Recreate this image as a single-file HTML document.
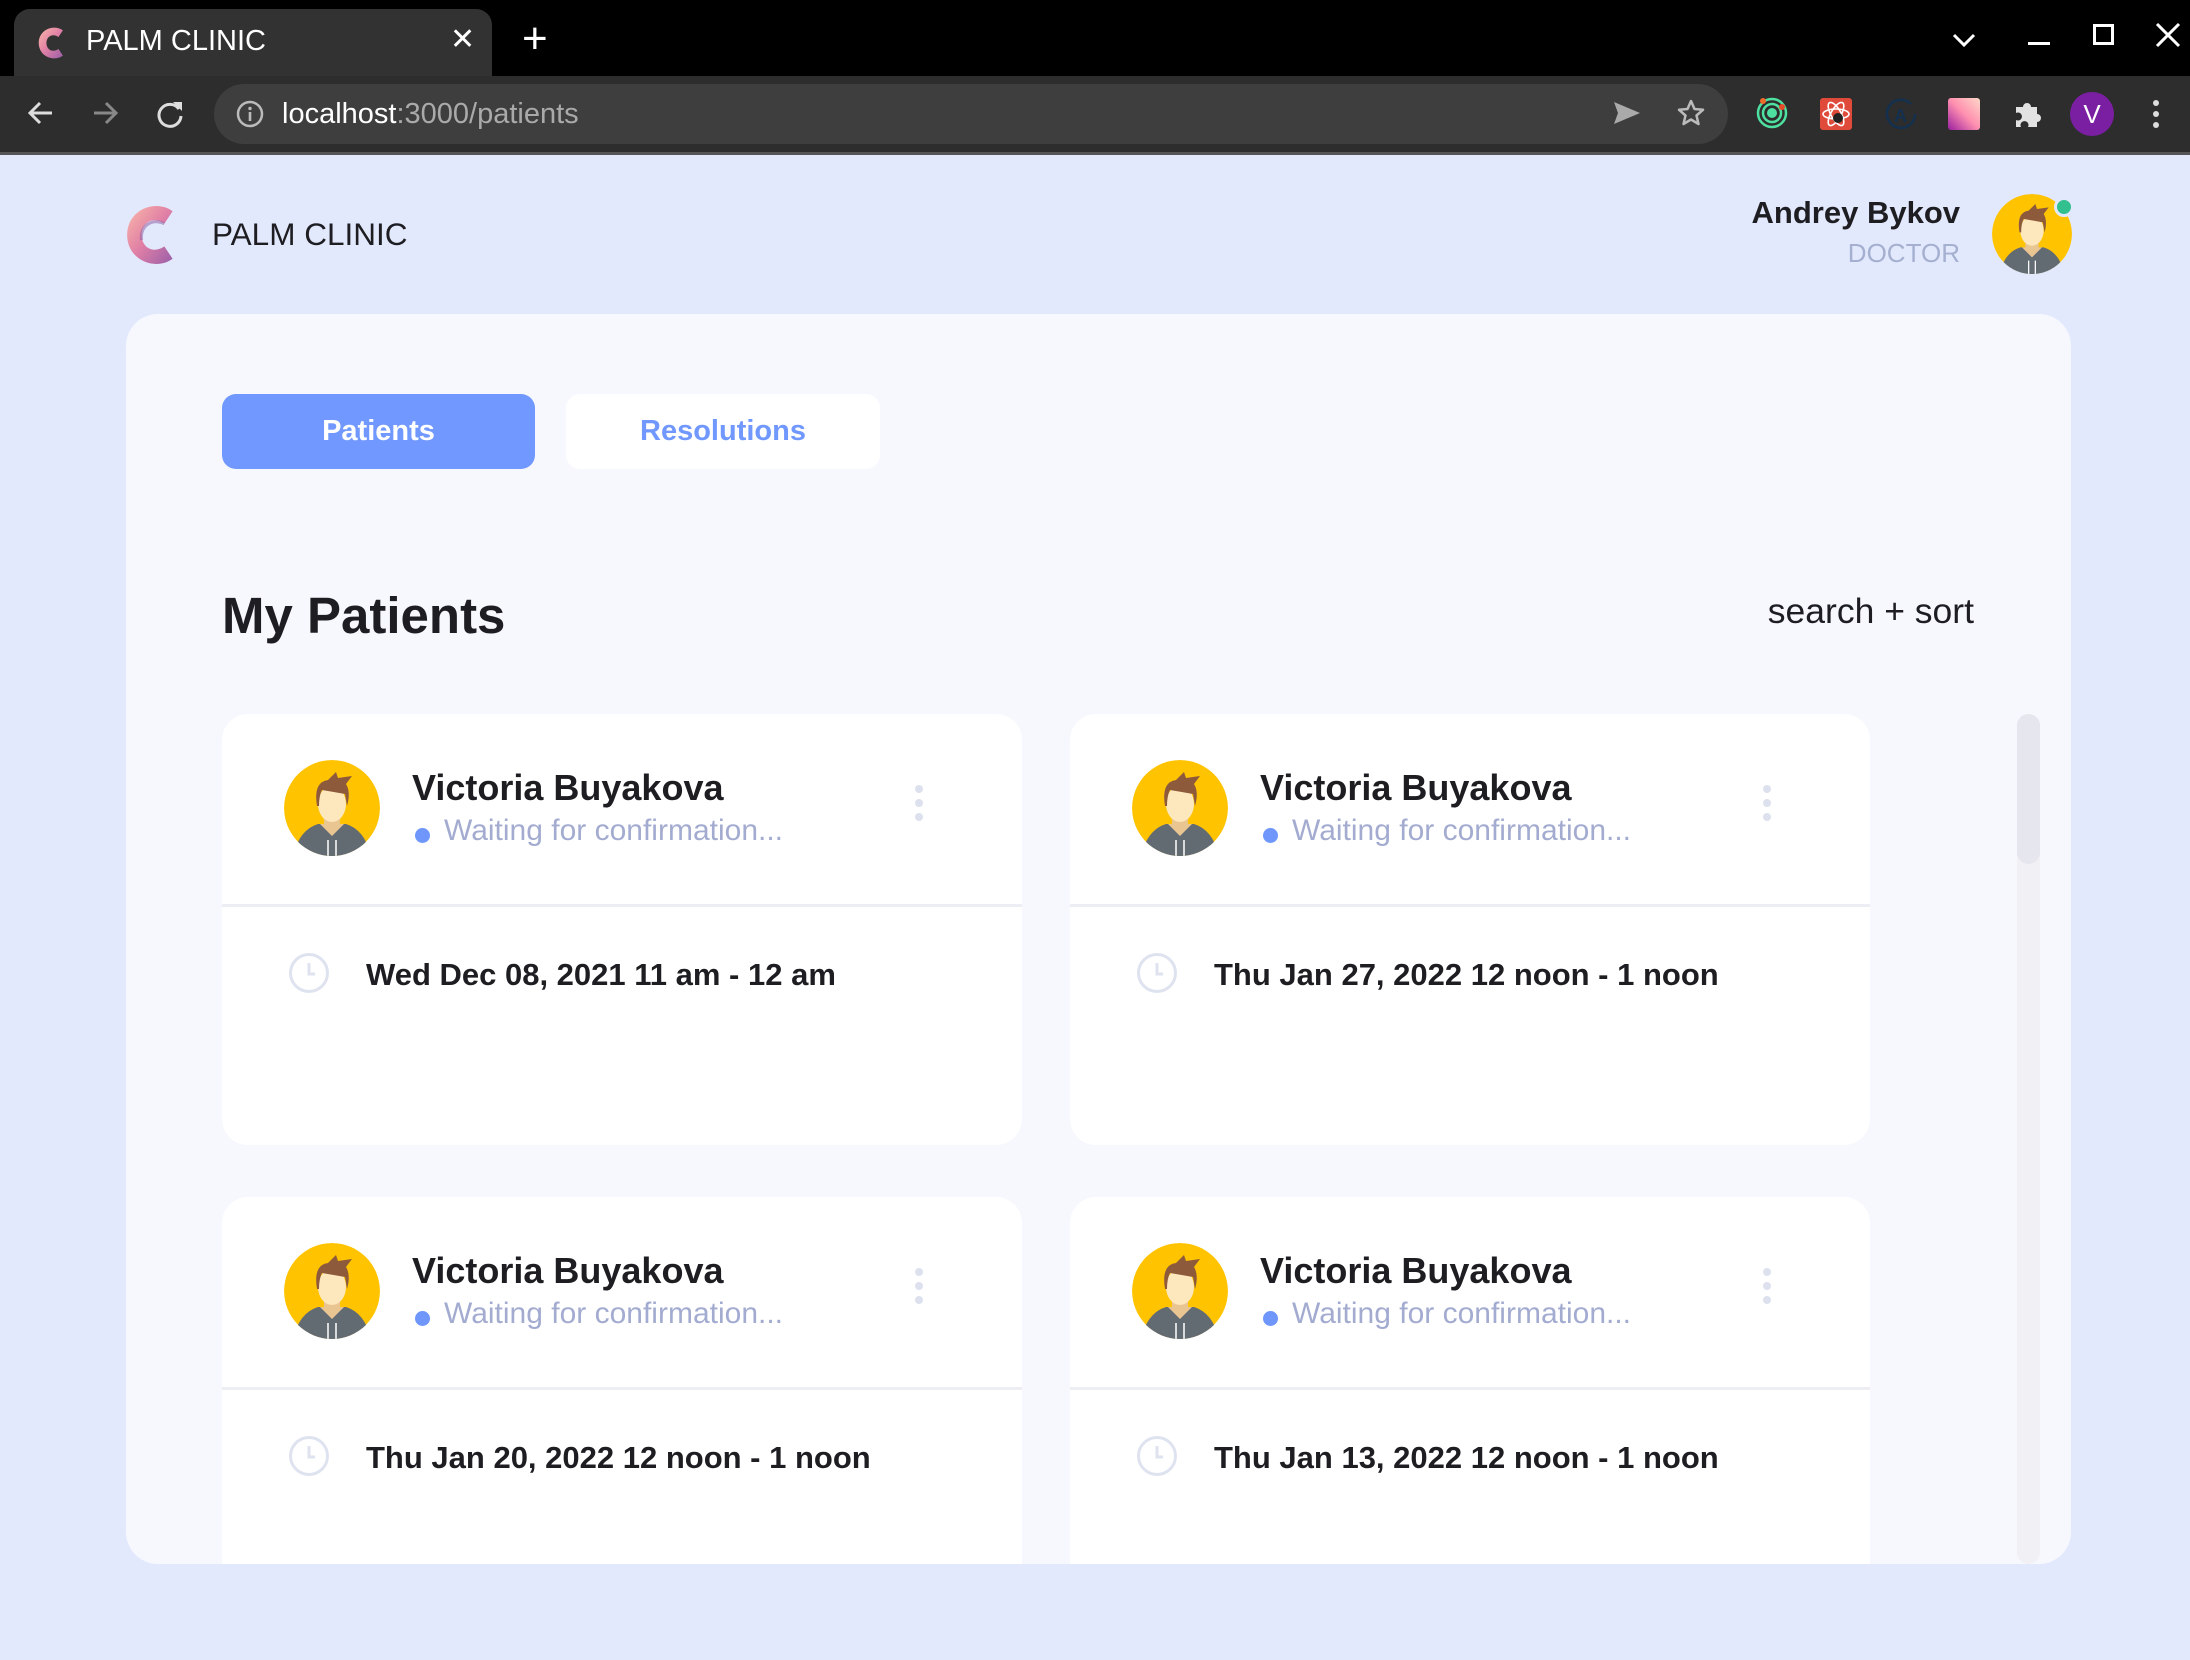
<!DOCTYPE html>
<html><head><meta charset="utf-8">
<style>
*{margin:0;padding:0;box-sizing:border-box}
body{width:2190px;height:1660px;background:#e3e9fd;font-family:"Liberation Sans",sans-serif;position:relative;overflow:hidden}
.a{position:absolute}
.card{position:absolute;width:800px;background:#fff;border-radius:26px;overflow:hidden}
.card .nm{position:absolute;left:190px;top:53px;font-size:36px;font-weight:bold;color:#1d1d22;white-space:nowrap}
.card .st{position:absolute;left:222px;top:100px;font-size:30px;color:#a3acd0;white-space:nowrap}
.card .dot{position:absolute;left:193px;top:114px;width:15px;height:15px;border-radius:50%;background:#6f97fb}
.card .av{position:absolute;left:62px;top:46px}
.card .kb{position:absolute;left:692px;top:70px}
.card .dv{position:absolute;left:0;top:190px;width:100%;height:3px;background:#eceef4}
.card .ck{position:absolute;left:66px;top:238px}
.card .dt{position:absolute;left:144px;top:243px;font-size:31px;font-weight:bold;color:#1d1d22;white-space:nowrap}
</style></head><body>
<svg width="0" height="0" style="position:absolute"><defs>
<clipPath id="cc"><circle cx="48" cy="48" r="48"/></clipPath>
<linearGradient id="lg" x1="0" y1="0" x2="1" y2="1"><stop offset="0" stop-color="#fbb9a8"/><stop offset=".5" stop-color="#e07fa6"/><stop offset="1" stop-color="#9a5fa8"/></linearGradient>
</defs></svg>

<div class="a" style="left:0;top:0;width:2190px;height:76px;background:#000"></div>
<div class="a" style="left:14px;top:9px;width:478px;height:70px;background:#323232;border-radius:16px 16px 0 0"></div>
<svg class="a" style="left:36px;top:26px" width="34" height="34" viewBox="0 0 56 62"><path d="M46 8 C30 -4 2 6 2 31 C2 56 30 66 46 54 L38 42 C26 50 16 42 16 31 C16 20 26 12 38 20 Z" fill="url(#lg)"/></svg>
<div class="a" style="left:86px;top:25px;font-size:29px;color:#fff">PALM CLINIC</div>
<div class="a" style="left:450px;top:22px;font-size:30px;color:#fff">✕</div>
<div class="a" style="left:522px;top:14px;font-size:44px;color:#fff;font-weight:300">+</div>
<svg class="a" style="left:1950px;top:30px" width="28" height="20" viewBox="0 0 28 20"><path d="M4 5 L14 15 L24 5" stroke="#fff" stroke-width="3" fill="none"/></svg>
<div class="a" style="left:2028px;top:42px;width:22px;height:3px;background:#fff"></div>
<div class="a" style="left:2093px;top:24px;width:21px;height:21px;border:3px solid #fff"></div>
<svg class="a" style="left:2155px;top:22px" width="26" height="26" viewBox="0 0 26 26"><path d="M2 2 L24 24 M24 2 L2 24" stroke="#fff" stroke-width="3"/></svg>

<div class="a" style="left:0;top:76px;width:2190px;height:76px;background:#2d2d2d"></div>
<div class="a" style="left:0;top:152px;width:2190px;height:3px;background:#555"></div>
<svg class="a" style="left:26px;top:98px" width="30" height="30" viewBox="0 0 30 30"><path d="M26 15 H5 M14 5 L4 15 L14 25" stroke="#ddd" stroke-width="3" fill="none"/></svg>
<svg class="a" style="left:90px;top:98px" width="30" height="30" viewBox="0 0 30 30"><path d="M4 15 H25 M16 5 L26 15 L16 25" stroke="#888" stroke-width="3" fill="none"/></svg>
<svg class="a" style="left:154px;top:98px" width="32" height="32" viewBox="0 0 32 32"><path d="M25 11 A11 11 0 1 0 27 18" stroke="#ddd" stroke-width="3" fill="none"/><path d="M19 4 L28 4 L28 13 Z" fill="#ddd"/></svg>
<div class="a" style="left:214px;top:84px;width:1514px;height:60px;background:#3e3e3e;border-radius:30px"></div>
<svg class="a" style="left:236px;top:100px" width="28" height="28" viewBox="0 0 28 28"><circle cx="14" cy="14" r="12" stroke="#bbb" stroke-width="2.5" fill="none"/><rect x="12.7" y="12" width="2.6" height="9" fill="#bbb"/><circle cx="14" cy="8.5" r="1.7" fill="#bbb"/></svg>
<div class="a" style="left:282px;top:98px;font-size:29px;color:#fff">localhost<span style="color:#aaa">:3000/patients</span></div>
<svg class="a" style="left:1612px;top:100px" width="30" height="26" viewBox="0 0 30 26"><path d="M2 2 L28 13 L2 24 L6 13 Z" fill="#aaa"/></svg>
<svg class="a" style="left:1676px;top:98px" width="30" height="30" viewBox="0 0 30 30"><path d="M15 3 L18.5 11 L27 11.8 L20.5 17.5 L22.5 26 L15 21.5 L7.5 26 L9.5 17.5 L3 11.8 L11.5 11 Z" stroke="#bbb" stroke-width="2.5" fill="none" stroke-linejoin="round"/></svg>
<svg class="a" style="left:1756px;top:97px" width="32" height="32" viewBox="0 0 32 32"><circle cx="16" cy="16" r="14" stroke="#4ee0a0" stroke-width="2.5" fill="none"/><circle cx="16" cy="16" r="9" stroke="#4ee0a0" stroke-width="2.5" fill="none"/><circle cx="16" cy="16" r="5" fill="#4ee0a0"/><circle cx="7" cy="4" r="3" fill="#f06a2a"/><circle cx="26" cy="10" r="3" fill="#e84a2a"/></svg>
<div class="a" style="left:1820px;top:98px;width:32px;height:32px;background:#e04a3a;border-radius:3px"></div>
<svg class="a" style="left:1820px;top:98px" width="32" height="32" viewBox="0 0 32 32"><g stroke="#fff" stroke-width="1.6" fill="none"><ellipse cx="16" cy="16" rx="13" ry="5"/><ellipse cx="16" cy="16" rx="13" ry="5" transform="rotate(60 16 16)"/><ellipse cx="16" cy="16" rx="13" ry="5" transform="rotate(-60 16 16)"/></g><circle cx="18" cy="20" r="5" fill="#222"/></svg>
<svg class="a" style="left:1884px;top:97px" width="34" height="34" viewBox="0 0 34 34"><path d="M27 7 A14 14 0 1 0 31 17" stroke="#13304f" stroke-width="2.5" fill="none"/><text x="10" y="25" font-size="18" font-weight="bold" fill="#13304f" font-family="Liberation Sans">A</text></svg>
<div class="a" style="left:1948px;top:98px;width:32px;height:32px;border-radius:3px;background:linear-gradient(225deg,#ffd8c8,#ff8fb0 50%,#9a1fa0)"></div>
<svg class="a" style="left:2012px;top:98px" width="32" height="32" viewBox="0 0 32 32"><path d="M4 9 H11 A4 4 0 1 1 19 9 H25 V16 A4 4 0 1 1 25 24 V29 H16 A4 4 0 1 0 9 29 H4 V22 A4 4 0 1 0 4 15 Z" fill="#e2e2e2"/></svg>
<div class="a" style="left:2070px;top:92px;width:44px;height:44px;border-radius:50%;background:#7a1fa2;color:#fff;font-size:26px;text-align:center;line-height:44px">V</div>
<svg class="a" style="left:2150px;top:98px" width="12" height="32" viewBox="0 0 12 32"><circle cx="6" cy="5" r="3" fill="#ddd"/><circle cx="6" cy="16" r="3" fill="#ddd"/><circle cx="6" cy="27" r="3" fill="#ddd"/></svg>

<svg class="a" style="left:124px;top:203px" width="60" height="64" viewBox="0 0 56 62"><path d="M46 8 C30 -4 2 6 2 31 C2 56 30 66 46 54 L38 42 C26 50 16 42 16 31 C16 20 26 12 38 20 Z" fill="url(#lg)"/><path d="M38 20 C24 14 14 24 16 36" stroke="#8a5aa0" stroke-width="3" fill="none" opacity=".5"/></svg>
<div class="a" style="left:212px;top:216px;font-size:31.5px;color:#1d1d22">PALM CLINIC</div>
<div class="a" style="right:230px;top:195px;font-size:31px;font-weight:bold;color:#1d1d22;white-space:nowrap">Andrey Bykov</div>
<div class="a" style="right:230px;top:238px;font-size:26px;color:#a5b0d0">DOCTOR</div>
<svg class="a" style="left:1992px;top:194px" width="80" height="80" viewBox="0 0 96 96"><g clip-path="url(#cc)"><circle cx="48" cy="48" r="48" fill="#ffc300"/><path d="M8 100 Q14 70 34 64 L62 64 Q82 70 88 100 Z" fill="#636b72"/><rect x="40" y="54" width="16" height="14" fill="#e9c592"/><path d="M36 64 L48 76 L60 64" fill="#e9c592"/><ellipse cx="48" cy="44" rx="14" ry="18" fill="#fde7bd"/><path d="M33 46 Q29 22 44 20 L52 12 L54 18 L68 16 L62 24 Q67 32 63 46 L61 34 Q50 32 38 30 Q35 36 35 46 Z" fill="#8d5a3b"/><path d="M44 80 V96 M52 80 V96" stroke="#fff" stroke-width="1.5"/></g></svg>
<div class="a" style="left:2054px;top:197px;width:20px;height:20px;border-radius:50%;background:#31c08e;border:3px solid #e3e9fd"></div>

<div class="a" style="left:126px;top:314px;width:1945px;height:1250px;background:#f7f8fe;border-radius:32px;overflow:hidden">
  <div class="a" style="left:96px;top:80px;width:313px;height:75px;background:#7098fe;border-radius:14px;color:#fff;font-size:29px;font-weight:bold;text-align:center;line-height:75px">Patients</div>
  <div class="a" style="left:440px;top:80px;width:314px;height:75px;background:#fff;border-radius:14px;color:#7098fe;font-size:29px;font-weight:bold;text-align:center;line-height:75px">Resolutions</div>
  <div class="a" style="left:96px;top:272px;font-size:51px;font-weight:bold;color:#1d1d22">My Patients</div>
  <div class="a" style="right:97px;top:277px;font-size:35.5px;color:#1d1d22;white-space:nowrap">search + sort</div>
  <div class="a" style="left:1891px;top:400px;width:23px;height:850px;background:#f1f0f5;border-radius:12px"></div>
  <div class="a" style="left:1891px;top:400px;width:23px;height:150px;background:#e5e6ee;border-radius:12px"></div>

  <div class="card" style="left:96px;top:400px;height:431px">
    <svg class="av" width="96" height="96" viewBox="0 0 96 96"><g clip-path="url(#cc)"><circle cx="48" cy="48" r="48" fill="#ffc300"/><path d="M8 100 Q14 70 34 64 L62 64 Q82 70 88 100 Z" fill="#636b72"/><rect x="40" y="54" width="16" height="14" fill="#e9c592"/><path d="M36 64 L48 76 L60 64" fill="#e9c592"/><ellipse cx="48" cy="44" rx="14" ry="18" fill="#fde7bd"/><path d="M33 46 Q29 22 44 20 L52 12 L54 18 L68 16 L62 24 Q67 32 63 46 L61 34 Q50 32 38 30 Q35 36 35 46 Z" fill="#8d5a3b"/><path d="M44 80 V96 M52 80 V96" stroke="#fff" stroke-width="1.5"/></g></svg>
    <div class="nm">Victoria Buyakova</div><div class="dot"></div><div class="st">Waiting for confirmation...</div>
    <svg class="kb" width="10" height="40" viewBox="0 0 10 40"><circle cx="5" cy="5" r="4" fill="#dde1ee"/><circle cx="5" cy="19" r="4" fill="#dde1ee"/><circle cx="5" cy="33" r="4" fill="#dde1ee"/></svg>
    <div class="dv"></div>
    <svg class="ck" width="42" height="42" viewBox="0 0 42 42"><circle cx="21" cy="21" r="18.5" stroke="#dfe3ef" stroke-width="3" fill="none"/><path d="M21 11 V22 H27" stroke="#dfe3ef" stroke-width="3" fill="none"/></svg>
    <div class="dt">Wed Dec 08, 2021 11 am - 12 am</div>
  </div>

  <div class="card" style="left:944px;top:400px;height:431px">
    <svg class="av" width="96" height="96" viewBox="0 0 96 96"><g clip-path="url(#cc)"><circle cx="48" cy="48" r="48" fill="#ffc300"/><path d="M8 100 Q14 70 34 64 L62 64 Q82 70 88 100 Z" fill="#636b72"/><rect x="40" y="54" width="16" height="14" fill="#e9c592"/><path d="M36 64 L48 76 L60 64" fill="#e9c592"/><ellipse cx="48" cy="44" rx="14" ry="18" fill="#fde7bd"/><path d="M33 46 Q29 22 44 20 L52 12 L54 18 L68 16 L62 24 Q67 32 63 46 L61 34 Q50 32 38 30 Q35 36 35 46 Z" fill="#8d5a3b"/><path d="M44 80 V96 M52 80 V96" stroke="#fff" stroke-width="1.5"/></g></svg>
    <div class="nm">Victoria Buyakova</div><div class="dot"></div><div class="st">Waiting for confirmation...</div>
    <svg class="kb" width="10" height="40" viewBox="0 0 10 40"><circle cx="5" cy="5" r="4" fill="#dde1ee"/><circle cx="5" cy="19" r="4" fill="#dde1ee"/><circle cx="5" cy="33" r="4" fill="#dde1ee"/></svg>
    <div class="dv"></div>
    <svg class="ck" width="42" height="42" viewBox="0 0 42 42"><circle cx="21" cy="21" r="18.5" stroke="#dfe3ef" stroke-width="3" fill="none"/><path d="M21 11 V22 H27" stroke="#dfe3ef" stroke-width="3" fill="none"/></svg>
    <div class="dt">Thu Jan 27, 2022 12 noon - 1 noon</div>
  </div>

  <div class="card" style="left:96px;top:883px;height:431px">
    <svg class="av" width="96" height="96" viewBox="0 0 96 96"><g clip-path="url(#cc)"><circle cx="48" cy="48" r="48" fill="#ffc300"/><path d="M8 100 Q14 70 34 64 L62 64 Q82 70 88 100 Z" fill="#636b72"/><rect x="40" y="54" width="16" height="14" fill="#e9c592"/><path d="M36 64 L48 76 L60 64" fill="#e9c592"/><ellipse cx="48" cy="44" rx="14" ry="18" fill="#fde7bd"/><path d="M33 46 Q29 22 44 20 L52 12 L54 18 L68 16 L62 24 Q67 32 63 46 L61 34 Q50 32 38 30 Q35 36 35 46 Z" fill="#8d5a3b"/><path d="M44 80 V96 M52 80 V96" stroke="#fff" stroke-width="1.5"/></g></svg>
    <div class="nm">Victoria Buyakova</div><div class="dot"></div><div class="st">Waiting for confirmation...</div>
    <svg class="kb" width="10" height="40" viewBox="0 0 10 40"><circle cx="5" cy="5" r="4" fill="#dde1ee"/><circle cx="5" cy="19" r="4" fill="#dde1ee"/><circle cx="5" cy="33" r="4" fill="#dde1ee"/></svg>
    <div class="dv"></div>
    <svg class="ck" width="42" height="42" viewBox="0 0 42 42"><circle cx="21" cy="21" r="18.5" stroke="#dfe3ef" stroke-width="3" fill="none"/><path d="M21 11 V22 H27" stroke="#dfe3ef" stroke-width="3" fill="none"/></svg>
    <div class="dt">Thu Jan 20, 2022 12 noon - 1 noon</div>
  </div>

  <div class="card" style="left:944px;top:883px;height:431px">
    <svg class="av" width="96" height="96" viewBox="0 0 96 96"><g clip-path="url(#cc)"><circle cx="48" cy="48" r="48" fill="#ffc300"/><path d="M8 100 Q14 70 34 64 L62 64 Q82 70 88 100 Z" fill="#636b72"/><rect x="40" y="54" width="16" height="14" fill="#e9c592"/><path d="M36 64 L48 76 L60 64" fill="#e9c592"/><ellipse cx="48" cy="44" rx="14" ry="18" fill="#fde7bd"/><path d="M33 46 Q29 22 44 20 L52 12 L54 18 L68 16 L62 24 Q67 32 63 46 L61 34 Q50 32 38 30 Q35 36 35 46 Z" fill="#8d5a3b"/><path d="M44 80 V96 M52 80 V96" stroke="#fff" stroke-width="1.5"/></g></svg>
    <div class="nm">Victoria Buyakova</div><div class="dot"></div><div class="st">Waiting for confirmation...</div>
    <svg class="kb" width="10" height="40" viewBox="0 0 10 40"><circle cx="5" cy="5" r="4" fill="#dde1ee"/><circle cx="5" cy="19" r="4" fill="#dde1ee"/><circle cx="5" cy="33" r="4" fill="#dde1ee"/></svg>
    <div class="dv"></div>
    <svg class="ck" width="42" height="42" viewBox="0 0 42 42"><circle cx="21" cy="21" r="18.5" stroke="#dfe3ef" stroke-width="3" fill="none"/><path d="M21 11 V22 H27" stroke="#dfe3ef" stroke-width="3" fill="none"/></svg>
    <div class="dt">Thu Jan 13, 2022 12 noon - 1 noon</div>
  </div>
</div>
</body></html>
